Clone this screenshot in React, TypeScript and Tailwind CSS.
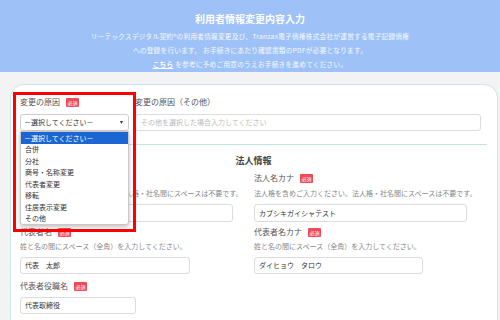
import React from "react";

const Badge = () => (
  <span className="ml-[6px] inline-flex h-[9px] w-[13px] items-center justify-center rounded-[1px] bg-[#ef4b55] text-[5px] leading-none text-white">
    必須
  </span>
);

const Label = ({ text, badge = true }: { text: string; badge?: boolean }) => (
  <div className="flex h-[10px] items-center text-[8px] leading-[10px] text-[#555]">
    <span>{text}</span>
    {badge && <Badge />}
  </div>
);

const Help = ({ text }: { text: string }) => (
  <div className="h-[10px] whitespace-nowrap text-[7px] leading-[10px] text-[#888]">{text}</div>
);

const Input = ({ w, value, h = "h-[17px]" }: { w: string; value?: string; h?: string }) => (
  <div
    className={`${w} ${h} flex items-center rounded-[3px] border border-[#dcdcdc] bg-white px-[4px] text-[7px] text-[#333]`}
  >
    {value}
  </div>
);

export default function App() {
  const items = ["合併", "分社", "商号・名称変更", "代表者変更", "移転", "住居表示変更", "その他"];
  return (
    <div className="relative h-[320px] w-[500px] overflow-hidden bg-[#f3f3f3] font-['Noto_Sans_CJK_JP','Noto_Sans',sans-serif]">
      {/* header */}
      <div className="flex h-[72px] flex-col items-center bg-[#9ec2f7] pt-[13px] text-white">
        <div className="text-[10px] font-bold leading-[12px]">利用者情報変更内容入力</div>
        <div className="mt-[4px] flex flex-col items-center text-[6.6px] leading-[14px] tracking-[0.3px] text-white/90">
          <div>リーテックスデジタル契約®の利用者情報変更及び、Tranzax電子債権株式会社が運営する電子記録債権</div>
          <div>への登録を行います。 お手続きにあたり確認書類のPDFが必要となります。</div>
          <div>
            <span className="font-bold text-white underline">こちら</span> を参考に予めご用意のうえお手続きを進めてください。
          </div>
        </div>
      </div>

      {/* card */}
      <div className="ml-[10px] mt-[12px] h-[300px] w-[488px] rounded-t-[14px] border border-[#c8e7ea] bg-white pl-[9px] pt-[12px]">
        <div className="flex">
          <div className="w-[109px]">
            <Label text="変更の原因" />
            <div className="mt-[7px] flex h-[17px] items-center justify-between rounded-[3px] border border-[#cfcfcf] bg-white pl-[3px] pr-[5px] text-[7px] text-[#333]">
              <span>－選択してください－</span>
              <svg width="3" height="3" viewBox="0 0 4 4">
                <path d="M0 0 L4 0 L2 4 Z" fill="#333" />
              </svg>
            </div>
          </div>
          <div className="ml-[6px] w-[346px]">
            <Label text="変更の原因（その他）" badge={false} />
            <div className="mt-[7px] flex h-[17px] items-center rounded-[3px] border border-[#dcdcdc] px-[5px] text-[7px] text-[#bbb]">
              その他を選択した場合入力してください
            </div>
          </div>
        </div>

        <div className="mt-[13px] h-px w-[467px] bg-[#bfe4e7]" />

        <div className="mt-[10px] w-[467px] text-center text-[9px] font-bold leading-[12px] text-[#444]">法人情報</div>

        <div className="mt-[6px] grid w-[467px] grid-cols-[234px_1fr]">
          <div className="flex flex-col">
            <div className="invisible">
              <Label text="法人名" />
            </div>
            <div className="mt-[5px] flex">
              <span className="invisible h-[10px] whitespace-nowrap text-[7px] leading-[10px]">法人格を含めご入力ください。法</span>
              <span className="h-[10px] whitespace-nowrap text-[7px] leading-[10px] text-[#888]">人格・社名間にスペースは不要です。</span>
            </div>
            <div className="mt-[6px]">
              <Input w="w-[213px]" h="h-[18px]" />
            </div>
            <div className="mt-[5px]">
              <Label text="代表者名" />
            </div>
            <div className="mt-[4px]">
              <Help text="姓と名の間にスペース（全角）を入力してください。" />
            </div>
            <div className="mt-[6px]">
              <Input w="w-[170px]" value="代表　太郎" />
            </div>
            <div className="mt-[7px]">
              <Label text="代表者役職名" />
            </div>
            <div className="mt-[6px]">
              <Input w="w-[116px]" value="代表取締役" />
            </div>
          </div>
          <div className="flex flex-col">
            <Label text="法人名カナ" />
            <div className="mt-[5px]">
              <Help text="法人格を含めご入力ください。法人格・社名間にスペースは不要です。" />
            </div>
            <div className="mt-[6px]">
              <Input w="w-[213px]" h="h-[18px]" value="カブシキガイシャテスト" />
            </div>
            <div className="mt-[5px]">
              <Label text="代表者名カナ" />
            </div>
            <div className="mt-[4px]">
              <Help text="姓と名の間にスペース（全角）を入力してください。" />
            </div>
            <div className="mt-[6px]">
              <Input w="w-[169px]" value="ダイヒョウ　タロウ" />
            </div>
          </div>
        </div>
      </div>

      {/* open dropdown list */}
      <div className="absolute left-[20px] top-[131px] w-[109px] overflow-hidden rounded-b-[3px] border border-[#c8c8c8] bg-white text-[7px] text-[#333] shadow-[0_2px_4px_rgba(0,0,0,0.25)]">
        <div className="flex h-[11.5px] items-center bg-[#1b66d2] px-[3px] text-white">－選択してください－</div>
        {items.map((it) => (
          <div key={it} className="flex h-[11.5px] items-center px-[4px]">
            {it}
          </div>
        ))}
      </div>

      {/* red annotation box */}
      <div className="absolute left-[13px] top-[92px] h-[140px] w-[123px] border-[3px] border-[#ff0000]" />
    </div>
  );
}
